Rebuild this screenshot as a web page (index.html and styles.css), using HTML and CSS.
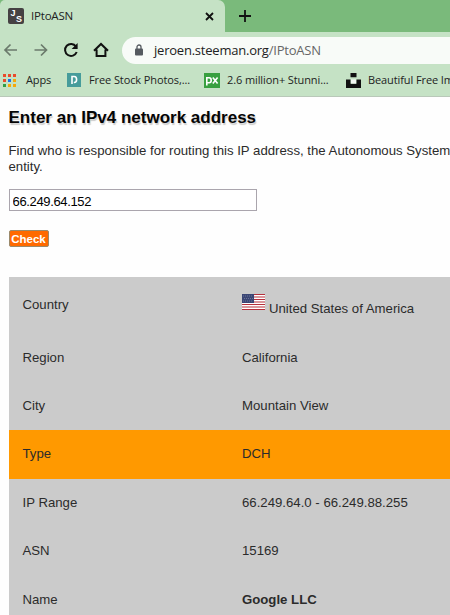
FILE: index.html
```
<!DOCTYPE html>
<html lang="en">
<head>
    <meta charset="UTF-8">
    <title>IPtoASN</title>
    <link rel="stylesheet" href="styles.css">
</head>
<body>
<div class="browser">
    <div class="tabs">
        <div class="tab">
            <svg class="favicon" viewBox="0 0 16 16">
                <rect width="16" height="16" rx="2" fill="#454143"/>
                <text x="2.5" y="8" class="favtext">J</text>
                <text x="8" y="13.5" class="favtext">S</text>
            </svg>
            <span class="tab-title">IPtoASN</span>
            <svg class="close" viewBox="0 0 9 9"><path d="M1 1l7 7M8 1L1 8" stroke="#111" stroke-width="1.8"/></svg>
        </div>
        <svg class="plus" viewBox="0 0 12 12"><path d="M6 0v12M0 6h12" stroke="#111" stroke-width="1.8"/></svg>
    </div>
    <div class="toolbar">
        <svg class="nav back" viewBox="0 0 16 16"><path d="M14 8H2M7.5 2.5L2 8l5.5 5.5" stroke="#6b7a6c"/></svg>
        <svg class="nav forward" viewBox="0 0 16 16"><path d="M1.5 8h12M8 2.5L13.500 8 8 13.500" stroke="#6b7a6c"/></svg>
        <svg class="nav reload" viewBox="0 0 16 16"><path d="M13 4.5A6 6 0 1 0 13.7 10" stroke="#111" stroke-width="2"/><path d="M14.6 1v6H8.600z" fill="#111"/></svg>
        <svg class="nav home" viewBox="0 0 16 16"><path d="M1 8.7L8 2l7 6.7M3.6 7.5V14h8.8V7.5" stroke="#111" stroke-width="2"/></svg>
        <div class="address">
            <svg class="lock" viewBox="0 0 8 12"><path d="M2 5V3a2 2 0 0 1 4 0v2" fill="none" stroke="#555a60" stroke-width="1.3"/><rect y="4.5" width="8" height="7" rx="1" fill="#555a60"/></svg>
            <span class="url">jeroen.steeman.org<span class="path">/IPtoASN</span></span>
        </div>
    </div>
    <div class="bookmarks">
        <div class="bookmark apps">
            <svg width="13" height="13" viewBox="0 0 13 13">
                <path d="M0 0h3v3H0zM5 0h3v3H5zM10 0h3v3h-3zM0 5h3v3H0z" fill="#e94b2c"/>
                <path d="M5 5h3v3H5z" fill="#1a73e8"/>
                <path d="M10 5h3v3h-3zM5 10h3v3H5zM10 10h3v3h-3z" fill="#f5a80c"/>
                <path d="M0 10h3v3H0z" fill="#2f9e48"/>
            </svg>
            <span>Apps</span>
        </div>
        <div class="bookmark stock">
            <svg width="14" height="14" viewBox="0 0 14 14"><rect width="14" height="14" fill="#469c9b"/><path d="M5 11V3.500h2.200a2.400 3 0 0 1 0 6H6.800" fill="none" stroke="#fff" stroke-width="1.6"/></svg>
            <span>Free Stock Photos,...</span>
        </div>
        <div class="bookmark pixa">
            <svg width="16" height="15" viewBox="0 0 16 15"><rect width="16" height="15" fill="#38a040"/><path d="M2.800 12.500V4.800H5.200a2 2.500 0 0 1 0 5H2.800M8.800 4.500l4.800 6M13.600 4.500l-4.800 6" fill="none" stroke="#fff" stroke-width="1.6"/></svg>
            <span>2.6 million+ Stunni...</span>
        </div>
        <div class="bookmark splash">
            <svg width="15" height="15" viewBox="0 0 15 15"><path d="M4.5 0h6v4.3h-6zM0 6.5h4.5v4.2h6V6.5H15V15H0z" fill="#111"/><path d="M5 6.500h5v4H5z" fill="#f3f8f3"/></svg>
            <span>Beautiful Free Images</span>
        </div>
    </div>
</div>
<div class="page">
    <h1>Enter an IPv4 network address</h1>
    <p>Find who is responsible for routing this IP address, the Autonomous System<br>entity.</p>
    <input class="ip" type="text" value="66.249.64.152">
    <button class="check">Check</button>
    <div class="result">
        <div class="row country">
            <span>Country</span>
            <span class="value">
                <svg class="flag" viewBox="0 0 23 16">
                    <rect width="23" height="16" fill="#fff"/>
                    <path d="M0 .5h23M0 3h23M0 5.5h23M0 8h23M0 10.5h23M0 13h23M0 15.5h23" stroke="#b5303b" stroke-width="1.200"/>
                    <rect width="12" height="9" fill="#3b4675"/>
                    <path d="M1 2h10M2 4.5h10M1 7h10" stroke="#7780a0" stroke-width=".8" stroke-dasharray="1 1"/>
                </svg>
                <span>United States of America</span>
            </span>
        </div>
        <div class="row"><span>Region</span><span>California</span></div>
        <div class="row"><span>City</span><span>Mountain View</span></div>
        <div class="row type"><span>Type</span><span>DCH</span></div>
        <div class="row"><span>IP Range</span><span>66.249.64.0 - 66.249.88.255</span></div>
        <div class="row"><span>ASN</span><span>15169</span></div>
        <div class="row"><span>Name</span><b>Google LLC</b></div>
    </div>
</div>
</body>
</html>
```
FILE: styles.css
```
*{
    box-sizing: border-box;
    margin: 0;
    padding: 0;
}
body{
    height: 615px;
    overflow: hidden;
    background: #fefefe;
    color: #2b2b2b;
    font: 13.2px/16px "Liberation Sans", Arial, sans-serif;
}
svg{
    display: block;
    flex: none;
}
.browser{
    height: 97px;
    overflow: hidden;
    background: #c5e2c5;
    border-bottom: 1px solid #b9c8b9;
    color: #222;
    font-family: "Open Sans", "Noto Sans", sans-serif;
    white-space: nowrap;
}
.tabs{
    display: flex;
    height: 32px;
    background: #7aba7b;
}
.tab{
    display: flex;
    align-items: center;
    width: 225px;
    padding: 0 11px 0 8px;
    background: #c5e2c5;
    border-radius: 5px 7px 0 0;
}
.favicon{
    width: 16px;
    height: 16px;
}
.favtext{
    fill: #fff;
    font: bold 9px "Liberation Sans", Arial, sans-serif;
}
.tab-title{
    flex: 1;
    margin-left: 7px;
    font-size: 11.5px;
    letter-spacing: -.2px;
}
.close{
    width: 9px;
    height: 9px;
}
.plus{
    width: 12px;
    height: 12px;
    margin: 10px 0 0 14px;
}
.toolbar{
    display: flex;
    align-items: center;
    height: 35px;
    padding-left: 3px;
}
.nav{
    width: 16px;
    height: 16px;
    margin-right: 14px;
    fill: none;
    stroke-width: 1.7;
}
.nav.home{
    margin-right: 13px;
}
.address{
    display: flex;
    flex: 1;
    align-items: center;
    height: 27px;
    margin-top: 1px;
    padding-left: 13px;
    background: #f8fbf8;
    border-radius: 14px 0 0 14px;
}
.lock{
    width: 8px;
    height: 12px;
}
.url{
    margin-left: 11px;
    font-size: 13px;
    letter-spacing: -.22px;
}
.path{
    color: #666;
}
.bookmarks{
    display: flex;
    height: 26px;
    padding-left: 3px;
    font-size: 11px;
    letter-spacing: -.1px;
}
.bookmark{
    display: flex;
    flex: none;
    align-items: center;
}
.apps{
    width: 64px;
    gap: 10px;
}
.stock{
    width: 137px;
    gap: 8px;
}
.pixa{
    width: 142px;
    gap: 7px;
}
.splash{
    gap: 7px;
}
.page{
    padding: 11px 0 0 8.5px;
}
h1{
    font-size: 17px;
    line-height: 20px;
    color: #050505;
    text-shadow: 1px 2px 1px #ccc;
    white-space: nowrap;
}
p{
    margin-top: 15px;
    white-space: nowrap;
}
.ip{
    display: block;
    width: 248px;
    height: 22px;
    margin-top: 14px;
    padding: 3px 3px 1px;
    border: 1px solid #aaa5ad;
    background: #fff;
    color: #000;
    font: 13px "Liberation Sans", Arial, sans-serif;
    letter-spacing: -.35px;
}
.check{
    display: block;
    width: 40px;
    height: 17px;
    margin-top: 19px;
    border: 1px solid #9a8a6c;
    border-radius: 2px;
    background: #ff6a00;
    color: #fff;
    font: bold 11.5px/14px "Liberation Sans", Arial, sans-serif;
}
.result{
    margin-top: 30px;
    background: #cbcbcb;
}
.row{
    display: grid;
    grid-template-columns: 219.5px 1fr;
    align-items: center;
    height: 48.4px;
    padding-left: 14px;
}
.country{
    height: 56.4px;
}
.value{
    display: flex;
    gap: 4px;
}
.flag{
    width: 23px;
    height: 16px;
}
.value span{
    padding-top: 7px;
}
.type{
    background: #ff9900;
}
```
